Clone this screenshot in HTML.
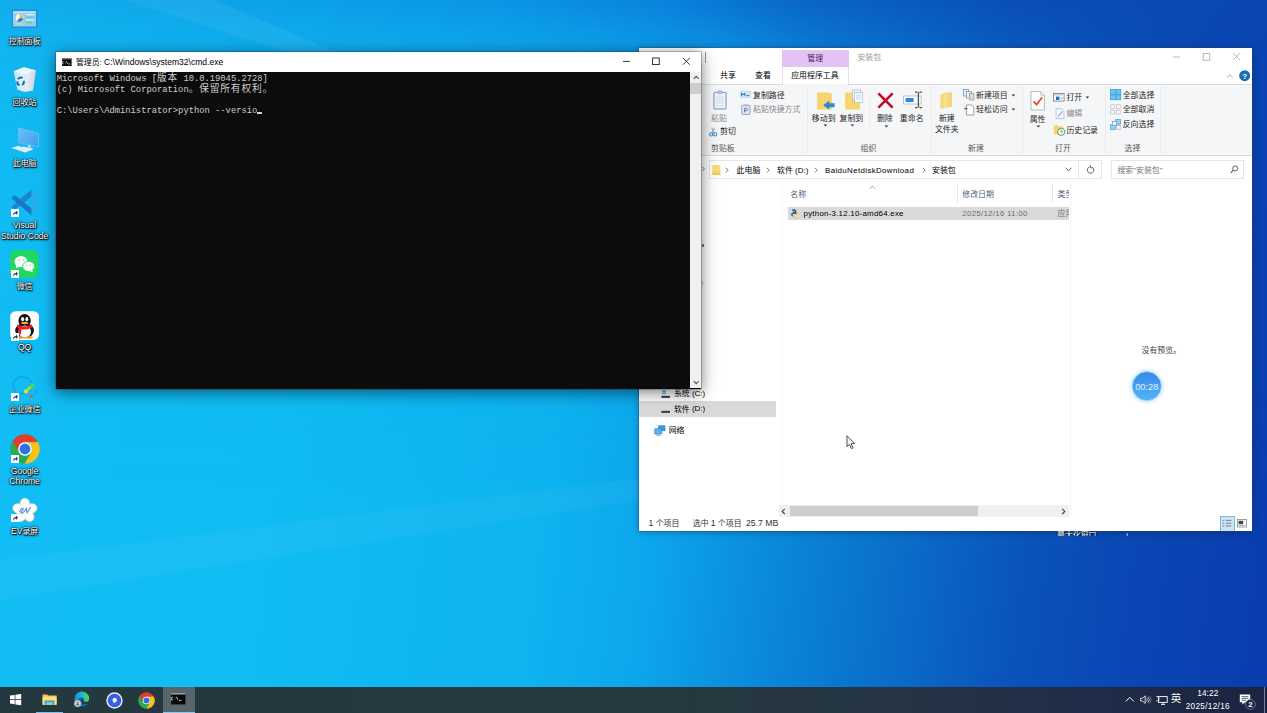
<!DOCTYPE html>
<html lang="zh-CN">
<head>
<meta charset="utf-8">
<title>Desktop</title>
<style>
*{box-sizing:border-box;margin:0;padding:0}
html,body{width:1267px;height:713px;overflow:hidden}
body{position:relative;font-family:"Liberation Sans","Noto Sans CJK SC",sans-serif;font-size:8px;color:#000;
background:linear-gradient(97deg,#12bef5 0%,#10bcf4 25%,#0eb3f0 45%,#0da6ec 53%,#0a86d8 63%,#0a6cc8 72%,#0a52ba 81%,#0a45b3 90%,#0a3cae 100%);}
#wall2{position:absolute;left:0;top:0;width:1267px;height:713px;background:linear-gradient(90deg,#11adec 0%,#0d9fe7 24%,#0b94e4 40%,#0a82dc 52%,#0a64c6 64%,#0a4eb6 80%,#0a46b2 100%);-webkit-mask-image:linear-gradient(180deg,#000 0%,rgba(0,0,0,.55) 6%,rgba(0,0,0,.25) 16%,rgba(0,0,0,.08) 40%,transparent 70%);mask-image:linear-gradient(180deg,#000 0%,rgba(0,0,0,.55) 6%,rgba(0,0,0,.25) 16%,rgba(0,0,0,.08) 40%,transparent 70%)}
.la{font-size:8.7px;line-height:0;position:relative;top:.1px}
.ll{font-size:8.6px;line-height:0}
.lb{font-size:8px;line-height:0;position:relative;top:-.3px}
.cj{font-size:9.7px;line-height:0;letter-spacing:.86px;position:relative;top:.2px}
svg{overflow:visible}
</style>
</head>
<body>
<div id="wall2"></div>
<svg style="position:absolute;left:0;top:0" width="1267" height="713" viewBox="0 0 1267 713"><polygon points="125,0 215,0 345,56 300,56" fill="#fff" opacity=".05"/><polygon points="0,560 640,478 640,500 0,600" fill="#fff" opacity=".035"/></svg>
<div id="desktop">
<svg style="position:absolute;left:12.0px;top:10.0px;" width="25" height="18" viewBox="0 0 25 18"><rect x="0.3" y="0.3" width="24.4" height="16.8" fill="#8fd0f2" stroke="#2b86d2" stroke-width="1.2"/><rect x="1.5" y="1.5" width="22" height="1.6" fill="#b8e2f8"/><circle cx="7.6" cy="8" r="3.9" fill="#f2f6fa"/><path d="M7.6 8 L7.6 4.1 A3.9 3.9 0 0 1 11.4 8.6 Z" fill="#f5c12e"/><path d="M7.6 8 L11.4 8.6 A3.9 3.9 0 0 1 5 10.9 Z" fill="#2d7fd0"/><rect x="14" y="4" width="8" height="1.3" fill="#d8eefa"/><rect x="14" y="6.6" width="8" height="1.3" fill="#66b5e8"/><rect x="14" y="9.2" width="8" height="1.3" fill="#d8eefa"/><rect x="14" y="11.8" width="6" height="1.3" fill="#7cc67a"/><rect x="3" y="13.2" width="8" height="1.2" fill="#e9d98a"/></svg>
<span style="position:absolute;left:-7.4px;width:64px;text-align:center;top:35.7px;font-size:7.92px;line-height:12px;color:#fff;white-space:nowrap;text-shadow:0.7px 0.7px 0.8px #000,0 0 1.4px #000,0 0 2.2px rgba(0,0,0,.85),0.5px 1px 2.5px rgba(0,0,0,.6);">控制面板</span>
<svg style="position:absolute;left:12.0px;top:66.0px;" width="26" height="27" viewBox="0 0 26 27"><defs><linearGradient id="rb" x1="0" x2="1"><stop offset="0" stop-color="#cfe6f4"/><stop offset=".5" stop-color="#f4f8fb"/><stop offset="1" stop-color="#dcd6dc"/></linearGradient></defs><path d="M1.6 5.2 L12 1.2 L24 4.6 L21 24.4 L12.6 26 L5.4 23.4 Z" fill="url(#rb)" opacity=".93"/><path d="M1.6 5.2 L12.6 8.2 L24 4.6 L12 1.2 Z" fill="#eef6fb" opacity=".95"/><path d="M12.6 8.2 L12.6 26" stroke="#c8d4de" stroke-width=".5"/><g fill="none" stroke="#1767b8" stroke-width="1.9"><path d="M6 13.2 A3.2 3.2 0 0 1 10.6 12"/><path d="M11.6 14.8 A3.2 3.2 0 0 1 10 18.8"/><path d="M7.6 19.2 A3.2 3.2 0 0 1 5.4 15.4"/></g></svg>
<span style="position:absolute;left:-7.4px;width:64px;text-align:center;top:96.8px;font-size:7.92px;line-height:12px;color:#fff;white-space:nowrap;text-shadow:0.7px 0.7px 0.8px #000,0 0 1.4px #000,0 0 2.2px rgba(0,0,0,.85),0.5px 1px 2.5px rgba(0,0,0,.6);">回收站</span>
<svg style="position:absolute;left:10.0px;top:126.0px;" width="32" height="28" viewBox="0 0 32 28"><defs><linearGradient id="pc" x1="0" y1="0" x2="1" y2="1"><stop offset="0" stop-color="#6cc0f6"/><stop offset="1" stop-color="#3a9ee8"/></linearGradient></defs><path d="M8.6 2 L28.6 7.4 L28.6 21 L8.6 16.6 Z" fill="url(#pc)" stroke="#7cc4f6" stroke-width=".7"/><path d="M18 19.2 L20.8 19.8 L21 21.6 L17.8 21 Z" fill="#cfe4f4"/><path d="M13.4 20.6 L23.6 22.8 L20.6 24.4 L10.6 22 Z" fill="#e6f0f8"/><path d="M1.6 22 L8 20 L22 23.6 L15.4 26.6 Z" fill="#f2f4f8"/><path d="M3.6 22.2 L8 20.8 L19.6 23.7 L15.2 25.6 Z" fill="#dfe6f2" opacity=".8"/></svg>
<span style="position:absolute;left:-7.4px;width:64px;text-align:center;top:158.4px;font-size:7.92px;line-height:12px;color:#fff;white-space:nowrap;text-shadow:0.7px 0.7px 0.8px #000,0 0 1.4px #000,0 0 2.2px rgba(0,0,0,.85),0.5px 1px 2.5px rgba(0,0,0,.6);">此电脑</span>
<svg style="position:absolute;left:9.5px;top:188.0px;" width="30" height="29" viewBox="0 0 30 29"><path d="M21.4 1.4 L27.4 4 L27.4 24.6 L21.4 27.2 Z" fill="#27acee"/><path d="M21.4 1.4 L21.4 8.4 L5 21.4 L1.8 19.4 L1.8 18.2 Z" fill="#1c86cf"/><path d="M21.4 27.2 L21.4 20.2 L5 7.2 L1.8 9.2 L1.8 10.4 Z" fill="#1878c0"/></svg>
<svg style="position:absolute;left:10.8px;top:209.0px;" width="8" height="8" viewBox="0 0 8 8"><rect x="0" y="0" width="8" height="8" fill="#fff"/><path d="M2 6.4 C2 4 3.4 3 5 3 L5 1.6 L7 3.8 L5 6 L5 4.6 C3.8 4.6 3 5 2 6.4Z" fill="#1a3f8a"/></svg>
<span style="position:absolute;left:-7.4px;width:64px;text-align:center;top:220.1px;font-size:7.92px;line-height:12px;color:#fff;white-space:nowrap;text-shadow:0.7px 0.7px 0.8px #000,0 0 1.4px #000,0 0 2.2px rgba(0,0,0,.85),0.5px 1px 2.5px rgba(0,0,0,.6);"><span class="ll">Visual</span></span>
<span style="position:absolute;left:-7.4px;width:64px;text-align:center;top:231.1px;font-size:7.92px;line-height:12px;color:#fff;white-space:nowrap;text-shadow:0.7px 0.7px 0.8px #000,0 0 1.4px #000,0 0 2.2px rgba(0,0,0,.85),0.5px 1px 2.5px rgba(0,0,0,.6);"><span class="ll">Studio Code</span></span>
<svg style="position:absolute;left:10.4px;top:250.0px;" width="29" height="28" viewBox="0 0 29 28"><rect x="0.2" y="0.2" width="28.4" height="27.6" rx="5.6" fill="#20d760"/><ellipse cx="11" cy="11.6" rx="6.6" ry="5.6" fill="#f2fbf4"/><path d="M6.6 15 L5.8 18.4 L9.6 16.6Z" fill="#f2fbf4"/><ellipse cx="18.6" cy="16.4" rx="5.9" ry="5" fill="#fafffb" stroke="#20d760" stroke-width=".8"/><path d="M22 20 L23.2 22.6 L19.6 21.2Z" fill="#fafffb"/><circle cx="8.8" cy="10" r=".8" fill="#8ad0a0"/><circle cx="13.2" cy="10" r=".8" fill="#8ad0a0"/><circle cx="16.6" cy="15.2" r=".7" fill="#8ad0a0"/><circle cx="20.4" cy="15.2" r=".7" fill="#8ad0a0"/></svg>
<svg style="position:absolute;left:11.0px;top:270.2px;" width="8" height="8" viewBox="0 0 8 8"><rect x="0" y="0" width="8" height="8" fill="#fff"/><path d="M2 6.4 C2 4 3.4 3 5 3 L5 1.6 L7 3.8 L5 6 L5 4.6 C3.8 4.6 3 5 2 6.4Z" fill="#1a3f8a"/></svg>
<span style="position:absolute;left:-7.4px;width:64px;text-align:center;top:281.1px;font-size:7.92px;line-height:12px;color:#fff;white-space:nowrap;text-shadow:0.7px 0.7px 0.8px #000,0 0 1.4px #000,0 0 2.2px rgba(0,0,0,.85),0.5px 1px 2.5px rgba(0,0,0,.6);">微信</span>
<svg style="position:absolute;left:10.4px;top:311.3px;" width="29.2" height="29.2" viewBox="0 0 29.2 29.2"><rect x="0.2" y="0.2" width="28.8" height="28.8" rx="5.6" fill="#fdfdfd"/><ellipse cx="14.6" cy="19.6" rx="9.4" ry="7.6" fill="#141414"/><ellipse cx="14.6" cy="9.8" rx="6.2" ry="6.8" fill="#111"/><ellipse cx="14.8" cy="20.6" rx="6.2" ry="6.2" fill="#fdfdfd"/><path d="M7.4 13.2 C11 16 18.4 16 21.8 13.2 L22.4 16 C18 19.4 11.4 19.4 6.8 16 Z" fill="#e8222c"/><path d="M8.6 16.6 L11.6 17.8 L10.8 23.4 L8 22.4 Z" fill="#e8222c"/><ellipse cx="12.6" cy="8.2" rx="1.5" ry="2.1" fill="#fff"/><ellipse cx="16.8" cy="8.2" rx="1.5" ry="2.1" fill="#fff"/><ellipse cx="14.7" cy="12" rx="3.6" ry="1.2" fill="#f5a81c"/><ellipse cx="10" cy="26.6" rx="3.6" ry="1.3" fill="#f5a81c"/><ellipse cx="19.4" cy="26.6" rx="3.6" ry="1.3" fill="#f5a81c"/></svg>
<svg style="position:absolute;left:11.0px;top:333.0px;" width="8" height="8" viewBox="0 0 8 8"><rect x="0" y="0" width="8" height="8" fill="#fff"/><path d="M2 6.4 C2 4 3.4 3 5 3 L5 1.6 L7 3.8 L5 6 L5 4.6 C3.8 4.6 3 5 2 6.4Z" fill="#1a3f8a"/></svg>
<span style="position:absolute;left:-7.4px;width:64px;text-align:center;top:342.4px;font-size:7.92px;line-height:12px;color:#fff;white-space:nowrap;text-shadow:0.7px 0.7px 0.8px #000,0 0 1.4px #000,0 0 2.2px rgba(0,0,0,.85),0.5px 1px 2.5px rgba(0,0,0,.6);"><span class="ll">QQ</span></span>
<svg style="position:absolute;left:10.0px;top:372.0px;" width="32" height="30" viewBox="0 0 32 30"><path d="M3 13.4 A9.6 8.4 0 1 1 8 20.6 L5.2 22.6 L5.6 19 A9 8 0 0 1 3 13.4Z" fill="none" stroke="#1c86ea" stroke-width="1.6" opacity=".5"/><path d="M15.8 19.6 L22.4 13.4" stroke="#8edc4a" stroke-width="3.2" stroke-linecap="round"/><circle cx="22.6" cy="13.2" r="2.2" fill="#3fd85a"/><circle cx="16" cy="19.4" r="2.1" fill="#d9e04a"/><circle cx="21.4" cy="24.2" r="1.6" fill="#e2553c"/><circle cx="26" cy="20" r="1.3" fill="#2a8cf0" opacity=".7"/></svg>
<svg style="position:absolute;left:11.0px;top:393.0px;" width="8" height="8" viewBox="0 0 8 8"><rect x="0" y="0" width="8" height="8" fill="#fff"/><path d="M2 6.4 C2 4 3.4 3 5 3 L5 1.6 L7 3.8 L5 6 L5 4.6 C3.8 4.6 3 5 2 6.4Z" fill="#1a3f8a"/></svg>
<span style="position:absolute;left:-7.4px;width:64px;text-align:center;top:403.8px;font-size:7.92px;line-height:12px;color:#fff;white-space:nowrap;text-shadow:0.7px 0.7px 0.8px #000,0 0 1.4px #000,0 0 2.2px rgba(0,0,0,.85),0.5px 1px 2.5px rgba(0,0,0,.6);">企业微信</span>
<svg style="position:absolute;left:10.0px;top:433.5px;" width="30" height="30" viewBox="0 0 30 30"><path d="M2.61 7.27 A14.6 14.6 0 0 1 27.89 8.14 L15.00 8.14 A6.86 6.86 0 0 0 9.06 18.43 Z" fill="#e33b2e" stroke="#e33b2e" stroke-width=".3"/><path d="M27.89 8.14 A14.6 14.6 0 0 1 14.50 29.59 L20.94 18.43 A6.86 6.86 0 0 0 15.00 8.14 Z" fill="#fbc116" stroke="#fbc116" stroke-width=".3"/><path d="M14.50 29.59 A14.6 14.6 0 0 1 2.61 7.27 L9.06 18.43 A6.86 6.86 0 0 0 20.94 18.43 Z" fill="#2da94f" stroke="#2da94f" stroke-width=".3"/><circle cx="15" cy="15" r="6.86" fill="#fff"/><circle cx="15" cy="15" r="5.40" fill="#2f6fe0"/></svg>
<svg style="position:absolute;left:10.8px;top:455.2px;" width="8" height="8" viewBox="0 0 8 8"><rect x="0" y="0" width="8" height="8" fill="#fff"/><path d="M2 6.4 C2 4 3.4 3 5 3 L5 1.6 L7 3.8 L5 6 L5 4.6 C3.8 4.6 3 5 2 6.4Z" fill="#1a3f8a"/></svg>
<span style="position:absolute;left:-7.4px;width:64px;text-align:center;top:465.6px;font-size:7.92px;line-height:12px;color:#fff;white-space:nowrap;text-shadow:0.7px 0.7px 0.8px #000,0 0 1.4px #000,0 0 2.2px rgba(0,0,0,.85),0.5px 1px 2.5px rgba(0,0,0,.6);"><span class="ll">Google</span></span>
<span style="position:absolute;left:-7.4px;width:64px;text-align:center;top:476.4px;font-size:7.92px;line-height:12px;color:#fff;white-space:nowrap;text-shadow:0.7px 0.7px 0.8px #000,0 0 1.4px #000,0 0 2.2px rgba(0,0,0,.85),0.5px 1px 2.5px rgba(0,0,0,.6);"><span class="ll">Chrome</span></span>
<svg style="position:absolute;left:10.9px;top:497.6px;" width="28" height="25" viewBox="0 0 31 28"><g fill="#fbfdff" stroke="#f0d6a8" stroke-width=".7"><ellipse cx="15.4" cy="6.6" rx="5.4" ry="6.4" transform="rotate(0 15.4 14.2)"/><ellipse cx="15.4" cy="6.6" rx="5.4" ry="6.4" transform="rotate(72 15.4 14.2)"/><ellipse cx="15.4" cy="6.6" rx="5.4" ry="6.4" transform="rotate(144 15.4 14.2)"/><ellipse cx="15.4" cy="6.6" rx="5.4" ry="6.4" transform="rotate(216 15.4 14.2)"/><ellipse cx="15.4" cy="6.6" rx="5.4" ry="6.4" transform="rotate(288 15.4 14.2)"/></g><circle cx="15.4" cy="14.2" r="7.4" fill="#f8fcff"/><path d="M9.4 15 C11.6 11 14.2 10.6 13.4 13 C12.8 14.8 10.6 15.6 10.8 16.6 C11.2 18 14 16.4 15.2 14.6 L17 11.4 L17.8 16.8 L21.6 10.4" fill="none" stroke="#5c86e0" stroke-width="1.2" stroke-linecap="round" stroke-linejoin="round"/></svg>
<svg style="position:absolute;left:11.0px;top:514.0px;" width="8" height="8" viewBox="0 0 8 8"><rect x="0" y="0" width="8" height="8" fill="#fff"/><path d="M2 6.4 C2 4 3.4 3 5 3 L5 1.6 L7 3.8 L5 6 L5 4.6 C3.8 4.6 3 5 2 6.4Z" fill="#1a3f8a"/></svg>
<span style="position:absolute;left:-7.4px;width:64px;text-align:center;top:526.3px;font-size:7.92px;line-height:12px;color:#fff;white-space:nowrap;text-shadow:0.7px 0.7px 0.8px #000,0 0 1.4px #000,0 0 2.2px rgba(0,0,0,.85),0.5px 1px 2.5px rgba(0,0,0,.6);"><span class="ll">EV</span>录屏</span>
</div>
<div id="explorer">
<div style="position:absolute;left:638.8px;top:47.6px;width:612.8px;height:483.8px;background:#fff;box-shadow:0 1px 7px rgba(0,0,0,.32),0 0 0 .6px rgba(60,90,130,.55);"></div>
<div style="position:absolute;left:705.2px;top:52.4px;width:0.8px;height:10.6px;background:#9a9a9a;"></div>
<div style="position:absolute;left:782.0px;top:49.5px;width:66.5px;height:17.6px;background:#e4c2f6;"></div>
<span style="position:absolute;left:795.2px;width:40px;text-align:center;top:52.5px;font-size:7.92px;line-height:12px;color:#3b1f5a;white-space:nowrap;">管理</span>
<span style="position:absolute;left:857.4px;top:52.3px;font-size:7.92px;line-height:12px;color:#999;white-space:nowrap;">安装包</span>
<svg style="position:absolute;left:1166.0px;top:50.0px;" width="90" height="14" viewBox="0 0 90 14"><g stroke="#a6a6a6" stroke-width=".8" fill="none"><path d="M6.6 7 H14"/><rect x="37.2" y="3.6" width="6.6" height="6.6"/><path d="M67.2 3.2 L74 10 M74 3.2 L67.2 10"/></g></svg>
<span style="position:absolute;left:720.0px;top:69.9px;font-size:7.92px;line-height:12px;color:#000;white-space:nowrap;">共享</span>
<span style="position:absolute;left:755.0px;top:69.9px;font-size:7.92px;line-height:12px;color:#000;white-space:nowrap;">查看</span>
<div style="position:absolute;left:782.0px;top:67.1px;width:66.5px;height:17.6px;background:#fff;border-left:.7px solid #e2e3e4;border-right:.7px solid #e2e3e4;"></div>
<span style="position:absolute;left:791.2px;top:69.9px;font-size:7.92px;line-height:12px;color:#000;white-space:nowrap;">应用程序工具</span>
<svg style="position:absolute;left:1226.0px;top:72.0px;" width="8" height="8" viewBox="0 0 8 8"><path d="M1.2 5.6 L4 2.8 L6.8 5.6" fill="none" stroke="#a0a0a0" stroke-width=".9"/></svg>
<svg style="position:absolute;left:1239.0px;top:70.4px;" width="11.4" height="11.4" viewBox="0 0 11.4 11.4"><circle cx="5.7" cy="5.7" r="5.5" fill="#1b6db3"/><text x="5.7" y="8.6" font-size="8" font-weight="bold" text-anchor="middle" fill="#fff" font-family="Liberation Sans,sans-serif">?</text></svg>
<div style="position:absolute;left:638.8px;top:84.3px;width:612.8px;height:72.2px;background:#f5f6f7;border-top:.7px solid #dadbdc;border-bottom:.7px solid #dadbdc;"></div>
<div style="position:absolute;left:782.7px;top:83.8px;width:65.1px;height:1.4px;background:#f5f6f7;"></div>
<div style="position:absolute;left:807.2px;top:87.0px;width:0.7px;height:66.0px;background:#eaebec;"></div>
<div style="position:absolute;left:930.6px;top:87.0px;width:0.7px;height:66.0px;background:#eaebec;"></div>
<div style="position:absolute;left:1021.6px;top:87.0px;width:0.7px;height:66.0px;background:#eaebec;"></div>
<div style="position:absolute;left:1105.0px;top:87.0px;width:0.7px;height:66.0px;background:#eaebec;"></div>
<div style="position:absolute;left:1160.0px;top:87.0px;width:0.7px;height:66.0px;background:#eaebec;"></div>
<div style="position:absolute;left:868.8px;top:96.6px;width:0.7px;height:31.5px;background:#edeeef;"></div>
<svg style="position:absolute;left:712.6px;top:90.0px;" width="14" height="20" viewBox="0 0 14 20"><rect x=".9" y="2.4" width="12.2" height="16.6" rx=".6" fill="#e6ecf6" stroke="#7f90c2" stroke-width="1"/><rect x="2.4" y="4.6" width="9.2" height="13" fill="#f6f9fe"/><g stroke="#c0cdea" stroke-width=".45"><path d="M2.4 6.8h9.2M2.4 9h9.2M2.4 11.2h9.2M2.4 13.4h9.2M2.4 15.6h9.2M4.7 4.6v13M7 4.6v13M9.3 4.6v13"/></g><rect x="4.8" y="0.8" width="4.4" height="2.6" rx=".8" fill="#c2cce2" stroke="#7f90c2" stroke-width=".6"/></svg>
<span style="position:absolute;left:704.0px;width:30px;text-align:center;top:113.0px;font-size:7.92px;line-height:12px;color:#8a8a8a;white-space:nowrap;">粘贴</span>
<svg style="position:absolute;left:708.6px;top:127.0px;" width="8.4" height="10" viewBox="0 0 9 10"><g fill="none" stroke="#2b8ad6" stroke-width="1.1"><circle cx="2.4" cy="7.6" r="1.7"/><circle cx="6.6" cy="7.6" r="1.7"/></g><path d="M3.2 6.2 L6 0.6 M5.8 6.2 L3 0.6" stroke="#777" stroke-width=".7"/></svg>
<span style="position:absolute;left:720.0px;top:126.3px;font-size:7.92px;line-height:12px;color:#1e1e1e;white-space:nowrap;">剪切</span>
<span style="position:absolute;left:711.0px;top:142.8px;font-size:7.92px;line-height:12px;color:#5a5a5a;white-space:nowrap;">剪贴板</span>
<svg style="position:absolute;left:740.2px;top:91.4px;" width="11" height="7" viewBox="0 0 11 7"><rect x=".3" y=".3" width="10.4" height="6.2" fill="#cfe6f8" stroke="#a8cdea" stroke-width=".5"/><path d="M1.6 5V2l1.6 2 1.6-2v3" stroke="#24507e" stroke-width=".8" fill="none"/><path d="M6.2 4.6h3" stroke="#24507e" stroke-width=".7"/></svg>
<span style="position:absolute;left:753.0px;top:89.8px;font-size:7.92px;line-height:12px;color:#1e1e1e;white-space:nowrap;">复制路径</span>
<svg style="position:absolute;left:740.6px;top:104.4px;" width="10" height="11" viewBox="0 0 10 11"><rect x=".8" y="1.4" width="8.2" height="9" rx=".6" fill="#e4e9f4" stroke="#8c98bc" stroke-width=".9"/><rect x="3" y=".4" width="3.8" height="1.8" fill="#aab4cf"/><path d="M3.6 8.4V4.4h2a1.1 1.1 0 0 1 0 2.2h-2" stroke="#4c5c9c" stroke-width=".8" fill="none"/></svg>
<span style="position:absolute;left:753.0px;top:104.3px;font-size:7.92px;line-height:12px;color:#8a8a8a;white-space:nowrap;">粘贴快捷方式</span>
<svg style="position:absolute;left:816.0px;top:90.6px;" width="19" height="20" viewBox="0 0 19 20"><path d="M1 1.6h12.4l2.6 1.2V18.4H1Z" fill="#f8d775"/><g stroke="#f2c85c" stroke-width=".5"><path d="M3.4 1.6v16.8M6 1.6v16.8M8.6 1.6v16.8M11.2 1.6v16.8M13.6 2v16.4"/></g><path d="M18.6 16.2h-5.4v2.6L7.2 14.2l6-4.6v2.6h5.4Z" fill="#2a8ad8"/></svg>
<span style="position:absolute;left:806.7px;width:34px;text-align:center;top:113.0px;font-size:7.92px;line-height:12px;color:#1e1e1e;white-space:nowrap;">移动到</span>
<svg style="position:absolute;left:822.6px;top:124.2px;" width="5" height="3" viewBox="0 0 5 3"><path d="M.6.4h3.6L2.4 2.4Z" fill="#333"/></svg>
<svg style="position:absolute;left:843.6px;top:88.6px;" width="20" height="22" viewBox="0 0 20 22"><g transform="translate(0,2)"><path d="M1 1.6h12.4l2.6 1.2V18.4H1Z" fill="#f8d775"/><g stroke="#f2c85c" stroke-width=".5"><path d="M3.4 1.6v16.8M6 1.6v16.8M8.6 1.6v16.8M11.2 1.6v16.8M13.6 2v16.4"/></g></g><rect x="8.4" y="1" width="8" height="10" fill="#eef2f8" stroke="#9fb0c8" stroke-width=".6"/><rect x="10.6" y="3.4" width="8" height="10" fill="#f6f9fd" stroke="#9fb0c8" stroke-width=".6"/><path d="M12 6.2h5M12 8h5M12 9.8h5" stroke="#a8c4e4" stroke-width=".6"/></svg>
<span style="position:absolute;left:834.4px;width:34px;text-align:center;top:113.0px;font-size:7.92px;line-height:12px;color:#1e1e1e;white-space:nowrap;">复制到</span>
<svg style="position:absolute;left:850.3px;top:124.2px;" width="5" height="3" viewBox="0 0 5 3"><path d="M.6.4h3.6L2.4 2.4Z" fill="#333"/></svg>
<svg style="position:absolute;left:876.6px;top:91.6px;" width="17" height="17" viewBox="0 0 17 17"><path d="M1.4 1.4 L15.6 15.6 M15.6 1.4 L1.4 15.6" stroke="#c30a2a" stroke-width="2.6"/></svg>
<span style="position:absolute;left:869.8px;width:30px;text-align:center;top:113.0px;font-size:7.92px;line-height:12px;color:#1e1e1e;white-space:nowrap;">删除</span>
<svg style="position:absolute;left:883.5px;top:124.6px;" width="5" height="3" viewBox="0 0 5 3"><path d="M.6.4h3.6L2.4 2.4Z" fill="#333"/></svg>
<svg style="position:absolute;left:902.6px;top:91.0px;" width="20" height="18" viewBox="0 0 20 18"><rect x=".5" y="5" width="17.6" height="8" fill="#fdfdfd" stroke="#9ab0c8" stroke-width=".7"/><rect x="2.6" y="7" width="8" height="4" fill="#2a8ad8"/><path d="M12 1.2h2.4m2 0H19M12 16.6h2.4m2 0H19M15.4 1.2v15.4" stroke="#505050" stroke-width="1.3" fill="none"/></svg>
<span style="position:absolute;left:894.7px;width:34px;text-align:center;top:113.0px;font-size:7.92px;line-height:12px;color:#1e1e1e;white-space:nowrap;">重命名</span>
<span style="position:absolute;left:860.6px;top:142.8px;font-size:7.92px;line-height:12px;color:#5a5a5a;white-space:nowrap;">组织</span>
<svg style="position:absolute;left:939.0px;top:91.0px;" width="15" height="19" viewBox="0 0 15 19"><defs><linearGradient id="nf" x1="0" x2="1"><stop offset="0" stop-color="#fbe39a"/><stop offset="1" stop-color="#f3cf62"/></linearGradient></defs><path d="M1.4 3.4 L8.6 1 L8.6 16.4 L1.4 17.8Z" fill="#f6d57a"/><path d="M4.6 2.4 L12.8 1.2 L12.8 15.8 L4.6 17.2Z" fill="url(#nf)"/></svg>
<span style="position:absolute;left:931.8px;width:30px;text-align:center;top:113.0px;font-size:7.92px;line-height:12px;color:#1e1e1e;white-space:nowrap;">新建</span>
<span style="position:absolute;left:929.8px;width:34px;text-align:center;top:124.3px;font-size:7.92px;line-height:12px;color:#1e1e1e;white-space:nowrap;">文件夹</span>
<svg style="position:absolute;left:963.0px;top:89.4px;" width="12" height="12" viewBox="0 0 12 12"><rect x=".6" y=".6" width="5" height="6.4" fill="#dcebf8" stroke="#5f8fc0" stroke-width=".7"/><rect x="3.6" y="2.6" width="5" height="6.4" fill="#f0f0f0" stroke="#8c8c8c" stroke-width=".7"/><rect x="6.4" y="4.6" width="4.6" height="6.4" fill="#d8d8d8" stroke="#9a9a9a" stroke-width=".7"/></svg>
<span style="position:absolute;left:976.0px;top:89.8px;font-size:7.92px;line-height:12px;color:#1e1e1e;white-space:nowrap;">新建项目</span>
<svg style="position:absolute;left:1010.6px;top:93.6px;" width="5" height="3" viewBox="0 0 5 3"><path d="M.6.4h3.6L2.4 2.4Z" fill="#333"/></svg>
<svg style="position:absolute;left:963.6px;top:103.6px;" width="11" height="12" viewBox="0 0 11 12"><path d="M2.4 1h5.4l2 2v8H2.4Z" fill="#fdfdfd" stroke="#7a7a7a" stroke-width=".7"/><path d="M.4 4.6h3.4M1.2 3.6v2" stroke="#444" stroke-width=".7"/></svg>
<span style="position:absolute;left:976.0px;top:104.3px;font-size:7.92px;line-height:12px;color:#1e1e1e;white-space:nowrap;">轻松访问</span>
<svg style="position:absolute;left:1010.6px;top:108.2px;" width="5" height="3" viewBox="0 0 5 3"><path d="M.6.4h3.6L2.4 2.4Z" fill="#333"/></svg>
<span style="position:absolute;left:968.0px;top:142.8px;font-size:7.92px;line-height:12px;color:#5a5a5a;white-space:nowrap;">新建</span>
<svg style="position:absolute;left:1030.4px;top:90.6px;" width="16" height="20" viewBox="0 0 16 20"><path d="M1 .6h9.8l3.6 3.6v14.8H1Z" fill="#fdfdfd" stroke="#a8a8a8" stroke-width=".8"/><path d="M10.8 .6v3.6h3.6" fill="#eee" stroke="#a8a8a8" stroke-width=".6"/><path d="M3.6 10.4 L6.6 13.6 L12.2 6.2" fill="none" stroke="#d9512c" stroke-width="1.7"/></svg>
<span style="position:absolute;left:1022.6px;width:30px;text-align:center;top:113.8px;font-size:7.92px;line-height:12px;color:#1e1e1e;white-space:nowrap;">属性</span>
<svg style="position:absolute;left:1036.2px;top:124.6px;" width="5" height="3" viewBox="0 0 5 3"><path d="M.6.4h3.6L2.4 2.4Z" fill="#333"/></svg>
<svg style="position:absolute;left:1053.4px;top:93.0px;" width="12" height="9" viewBox="0 0 12 9"><rect x=".5" y=".5" width="10.6" height="7.6" fill="#fdfdfd" stroke="#6a7a8a" stroke-width=".8"/><rect x="1" y="1" width="9.6" height="1.6" fill="#c8d4e0"/><rect x="3" y="3.6" width="3.4" height="3.4" fill="#1f6fb8"/><rect x="7.2" y="4" width="2.6" height="2.4" fill="#b8d4ec"/></svg>
<span style="position:absolute;left:1066.4px;top:92.0px;font-size:7.92px;line-height:12px;color:#1e1e1e;white-space:nowrap;">打开</span>
<svg style="position:absolute;left:1084.9px;top:95.6px;" width="5" height="3" viewBox="0 0 5 3"><path d="M.6.4h3.6L2.4 2.4Z" fill="#333"/></svg>
<svg style="position:absolute;left:1054.6px;top:108.2px;" width="10" height="11" viewBox="0 0 10 11"><path d="M1 .6h5.4l2.6 2.6v7.4H1Z" fill="#f4f7fd" stroke="#a8b8dc" stroke-width=".7"/><path d="M3 8.6 L7.4 3.4" stroke="#9ab0e0" stroke-width="1.2"/></svg>
<span style="position:absolute;left:1066.4px;top:108.1px;font-size:7.92px;line-height:12px;color:#8a8a8a;white-space:nowrap;">编辑</span>
<svg style="position:absolute;left:1052.8px;top:123.6px;" width="13" height="12" viewBox="0 0 13 12"><path d="M.8 1.4h4l1 1h4.4v8H.8Z" fill="#f3d56e"/><circle cx="8.2" cy="7.8" r="3.6" fill="#f2f6f2" stroke="#4a9a4a" stroke-width=".9"/><path d="M8.2 5.8v2.2h1.8" stroke="#4a9a4a" stroke-width=".8" fill="none"/></svg>
<span style="position:absolute;left:1066.4px;top:124.7px;font-size:7.92px;line-height:12px;color:#1e1e1e;white-space:nowrap;">历史记录</span>
<span style="position:absolute;left:1055.0px;top:142.8px;font-size:7.92px;line-height:12px;color:#5a5a5a;white-space:nowrap;">打开</span>
<svg style="position:absolute;left:1109.6px;top:89.4px;" width="12" height="12" viewBox="0 0 12 12"><g fill="#6cc4ee" stroke="#2a9adf" stroke-width=".7"><rect x=".5" y=".5" width="4.8" height="4.8"/><rect x="6" y=".5" width="4.8" height="4.8"/><rect x=".5" y="6" width="4.8" height="4.8"/><rect x="6" y="6" width="4.8" height="4.8"/></g></svg>
<span style="position:absolute;left:1122.7px;top:89.8px;font-size:7.92px;line-height:12px;color:#1e1e1e;white-space:nowrap;">全部选择</span>
<svg style="position:absolute;left:1109.6px;top:104.2px;" width="12" height="12" viewBox="0 0 12 12"><g fill="#fafafa" stroke="#b8b8c8" stroke-width=".7"><rect x=".7" y=".7" width="3.8" height="3.8"/><rect x="6.4" y=".7" width="3.8" height="3.8"/><rect x=".7" y="6.2" width="3.8" height="3.8"/><rect x="6.4" y="6.2" width="3.8" height="3.8"/></g></svg>
<span style="position:absolute;left:1122.7px;top:104.3px;font-size:7.92px;line-height:12px;color:#1e1e1e;white-space:nowrap;">全部取消</span>
<svg style="position:absolute;left:1109.6px;top:118.6px;" width="12" height="12" viewBox="0 0 12 12"><g stroke-width=".7"><rect x="5.8" y=".6" width="4.6" height="4.6" fill="#9ad4f4" stroke="#3a9adf"/><rect x=".6" y="5.8" width="4.6" height="4.6" fill="#9ad4f4" stroke="#3a9adf"/><rect x="2.4" y="2.6" width="4" height="4" fill="#f4f8fc" stroke="#6a9acf"/><rect x="6.4" y="6.4" width="3.8" height="3.8" fill="#f4f8fc" stroke="#9ab0cf"/></g></svg>
<span style="position:absolute;left:1122.7px;top:118.9px;font-size:7.92px;line-height:12px;color:#1e1e1e;white-space:nowrap;">反向选择</span>
<span style="position:absolute;left:1124.6px;top:142.8px;font-size:7.92px;line-height:12px;color:#5a5a5a;white-space:nowrap;">选择</span>
<div style="position:absolute;left:708.6px;top:159.7px;width:370.6px;height:19.6px;background:#fff;border:.7px solid #e6e6e6;"></div>
<div style="position:absolute;left:1079.2px;top:159.7px;width:23.0px;height:19.6px;background:#fff;border:.7px solid #e6e6e6;border-left:none;"></div>
<div style="position:absolute;left:1110.8px;top:159.7px;width:133.0px;height:19.6px;background:#fff;border:.7px solid #e6e6e6;"></div>
<svg style="position:absolute;left:711.6px;top:163.6px;" width="9" height="12" viewBox="0 0 9 12"><path d="M.4 1h6.4l1.6 1V11H.4Z" fill="#f7dc7a"/><path d="M.4 8.6h8V11h-8Z" fill="#efcb5a"/></svg>
<svg style="position:absolute;left:725.4px;top:166.6px;" width="4" height="6.4" viewBox="0 0 4 6.4"><path d="M.8.8 L3.2 3.2 L.8 5.6" fill="none" stroke="#6a6a6a" stroke-width=".9"/></svg>
<svg style="position:absolute;left:766.4px;top:166.6px;" width="4" height="6.4" viewBox="0 0 4 6.4"><path d="M.8.8 L3.2 3.2 L.8 5.6" fill="none" stroke="#6a6a6a" stroke-width=".9"/></svg>
<svg style="position:absolute;left:814.4px;top:166.6px;" width="4" height="6.4" viewBox="0 0 4 6.4"><path d="M.8.8 L3.2 3.2 L.8 5.6" fill="none" stroke="#6a6a6a" stroke-width=".9"/></svg>
<svg style="position:absolute;left:921.6px;top:166.6px;" width="4" height="6.4" viewBox="0 0 4 6.4"><path d="M.8.8 L3.2 3.2 L.8 5.6" fill="none" stroke="#6a6a6a" stroke-width=".9"/></svg>
<span style="position:absolute;left:736.6px;top:164.9px;font-size:7.92px;line-height:12px;color:#000;white-space:nowrap;">此电脑</span>
<span style="position:absolute;left:777.0px;top:164.9px;font-size:7.92px;line-height:12px;color:#000;white-space:nowrap;">软件 <span class="lb">(D:)</span></span>
<span class="la" style="position:absolute;left:825.0px;top:164.9px;font-size:7.92px;line-height:12px;color:#000;white-space:nowrap;letter-spacing:.37px;">BaiduNetdiskDownload</span>
<span style="position:absolute;left:932.0px;top:164.9px;font-size:7.92px;line-height:12px;color:#000;white-space:nowrap;">安装包</span>
<svg style="position:absolute;left:1065.2px;top:167.4px;" width="7" height="5" viewBox="0 0 7 5"><path d="M.6.8 L3.5 3.7 L6.4.8" fill="none" stroke="#555" stroke-width="1"/></svg>
<svg style="position:absolute;left:1086.4px;top:164.6px;" width="9" height="10" viewBox="0 0 9 10"><path d="M6.9 2.5 A3.3 3.3 0 1 1 3.4 1.8" fill="none" stroke="#555" stroke-width=".9"/><path d="M4.4.2v2.6H7" fill="none" stroke="#555" stroke-width=".9"/></svg>
<span style="position:absolute;left:1117.4px;top:164.9px;font-size:7.92px;line-height:12px;color:#767676;white-space:nowrap;">搜索"安装包"</span>
<svg style="position:absolute;left:1230.4px;top:165.0px;" width="8.4" height="9" viewBox="0 0 8.4 9"><circle cx="5.2" cy="3.4" r="2.5" fill="none" stroke="#555" stroke-width=".9"/><path d="M3.4 5.2 L.8 8" stroke="#555" stroke-width="1.1"/></svg>
<svg style="position:absolute;left:702.0px;top:166.4px;" width="3" height="6" viewBox="0 0 3 6"><path d="M.4.8 L2.4 2.9 L.4 5" fill="none" stroke="#777" stroke-width=".9"/></svg>
<div style="position:absolute;left:782.4px;top:184.0px;width:0.6px;height:322.0px;background:#f8f8f8;"></div>
<svg style="position:absolute;left:660.6px;top:389.8px;" width="9.4" height="9" viewBox="0 0 9.4 9"><rect x=".4" y="5.8" width="8.6" height="2.1" fill="#3a4048"/><rect x="1.2" y=".4" width="1.6" height="1.6" fill="#2ab0c8"/><rect x="3.2" y=".4" width="1.6" height="1.6" fill="#2ab0c8"/><rect x="1.2" y="2.4" width="1.6" height="1.6" fill="#2ab0c8"/><rect x="3.2" y="2.4" width="1.6" height="1.6" fill="#2ab0c8"/></svg>
<span style="position:absolute;left:673.9px;top:387.8px;font-size:7.92px;line-height:12px;color:#000;white-space:nowrap;">系统 <span class="lb">(C:)</span></span>
<div style="position:absolute;left:639.2px;top:401.3px;width:137.0px;height:15.7px;background:#d9d9d9;"></div>
<svg style="position:absolute;left:660.6px;top:408.8px;" width="9.4" height="5" viewBox="0 0 9.4 5"><rect x=".4" y="1.8" width="8.6" height="2.1" fill="#3a4048"/></svg>
<span style="position:absolute;left:673.9px;top:403.5px;font-size:7.92px;line-height:12px;color:#000;white-space:nowrap;">软件 <span class="lb">(D:)</span></span>
<svg style="position:absolute;left:654.0px;top:425.0px;" width="12" height="11" viewBox="0 0 12 11"><rect x="4.6" y=".8" width="6.4" height="5" fill="#3d9be4" stroke="#1f78c8" stroke-width=".6"/><rect x=".8" y="3.8" width="7" height="5.2" fill="#5ab4f0" stroke="#1f78c8" stroke-width=".6"/><path d="M2.4 10.2h4" stroke="#6a7a8a" stroke-width=".8"/></svg>
<span style="position:absolute;left:668.7px;top:424.7px;font-size:7.92px;line-height:12px;color:#000;white-space:nowrap;">网络</span>
<div style="position:absolute;left:701.6px;top:243.8px;width:2.2px;height:3.6px;background:#555;opacity:.8;"></div>
<div style="position:absolute;left:701.6px;top:280.6px;width:1.4px;height:4.4px;background:#999;opacity:.6;"></div>
<span style="position:absolute;left:790.3px;top:188.8px;font-size:7.92px;line-height:12px;color:#4c607a;white-space:nowrap;">名称</span>
<svg style="position:absolute;left:869.0px;top:184.6px;" width="7" height="5" viewBox="0 0 7 5"><path d="M.8 3.8 L3.4 1.2 L6 3.8" fill="none" stroke="#8a8a8a" stroke-width=".8"/></svg>
<div style="position:absolute;left:957.2px;top:184.0px;width:0.6px;height:18.6px;background:#e5e5e5;"></div>
<span style="position:absolute;left:962.3px;top:188.8px;font-size:7.92px;line-height:12px;color:#4c607a;white-space:nowrap;">修改日期</span>
<div style="position:absolute;left:1052.3px;top:184.0px;width:0.6px;height:18.6px;background:#e5e5e5;"></div>
<div style="position:absolute;left:1057.5px;top:184px;width:11.4px;height:20px;overflow:hidden"><span style="position:absolute;left:0.0px;top:4.8px;font-size:7.92px;line-height:12px;color:#4c607a;white-space:nowrap;">类型</span></div>
<div style="position:absolute;left:788.0px;top:207.0px;width:281.0px;height:13.4px;background:#d9d9d9;"></div>
<svg style="position:absolute;left:790.0px;top:209.0px;" width="10" height="10" viewBox="0 0 10 10"><rect x="1" y="1.4" width="7.6" height="5" rx=".8" fill="#cfe4f6"/><path d="M2.2 1.2c2-.8 3.6 0 3.6 1.4v1.6H3C1.4 4.2 1.4 7 3 7" fill="none" stroke="#2f5f94" stroke-width="1.5"/><path d="M7.2 8.8c-1.8.6-3 0-3-1.2V6h2.6c1.6 0 1.6-2.8 0-2.8" fill="none" stroke="#f0d060" stroke-width="1.5"/><path d="M4 .6v3M2.8 2.6 4 3.8 5.2 2.6" stroke="#1f3f64" stroke-width=".7" fill="none"/></svg>
<span class="la" style="position:absolute;left:803.5px;top:208.4px;font-size:7.92px;line-height:12px;color:#000;white-space:nowrap;letter-spacing:.24px;">python-3.12.10-amd64.exe</span>
<span class="la" style="position:absolute;left:962.3px;top:208.4px;font-size:7.92px;line-height:12px;color:#6d6d6d;white-space:nowrap;letter-spacing:.27px;">2025/12/16 11:00</span>
<div style="position:absolute;left:1057.5px;top:204px;width:11.4px;height:20px;overflow:hidden"><span style="position:absolute;left:0.0px;top:4.3px;font-size:7.92px;line-height:12px;color:#6d6d6d;white-space:nowrap;">应用程序</span></div>
<div style="position:absolute;left:779.0px;top:505.4px;width:290.0px;height:11.4px;background:#f0f0f0;"></div>
<div style="position:absolute;left:790.2px;top:505.8px;width:187.8px;height:10.6px;background:#cdcdcd;"></div>
<svg style="position:absolute;left:781.4px;top:507.6px;" width="5" height="7" viewBox="0 0 5 7"><path d="M3.8.8 L1.2 3.4 L3.8 6" fill="none" stroke="#404040" stroke-width="1.1"/></svg>
<svg style="position:absolute;left:1061.0px;top:507.6px;" width="5" height="7" viewBox="0 0 5 7"><path d="M1.2.8 L3.8 3.4 L1.2 6" fill="none" stroke="#404040" stroke-width="1.1"/></svg>
<div style="position:absolute;left:1069.6px;top:184.0px;width:0.6px;height:333.0px;background:#f2f2f2;"></div>
<span style="position:absolute;left:1141.5px;top:344.6px;font-size:7.92px;line-height:12px;color:#444;white-space:nowrap;">没有预览。</span>
<span style="position:absolute;left:648.6px;top:518.3px;font-size:7.92px;line-height:12px;color:#333;white-space:nowrap;"><span class="la">1</span> 个项目</span>
<span style="position:absolute;left:692.8px;top:518.3px;font-size:7.92px;line-height:12px;color:#333;white-space:nowrap;">选中 <span class="la">1</span> 个项目&nbsp; <span class="la">25.7 MB</span></span>
<div style="position:absolute;left:1220.0px;top:516.2px;width:14.6px;height:15.2px;background:#c9e6f8;border:.7px solid #86b8d4;border-bottom:none;"></div>
<svg style="position:absolute;left:1222.4px;top:518.6px;" width="10" height="10" viewBox="0 0 10 10"><g stroke="#5a6a7a" stroke-width=".8"><path d="M.6 1.4h1.6M3.6 1.4h5.8M.6 4.2h1.6M3.6 4.2h5.8M.6 7h1.6M3.6 7h5.8"/></g></svg>
<svg style="position:absolute;left:1237.0px;top:519.0px;" width="10" height="9" viewBox="0 0 10 9"><rect x=".4" y=".4" width="9" height="7.6" fill="#fdfdfd" stroke="#7a7a7a" stroke-width=".7"/><rect x="1.6" y="1.8" width="4.6" height="3.4" fill="#3a4a5a"/><path d="M1.6 6.4h6.6" stroke="#7a7a7a" stroke-width=".6"/></svg>
</div>
<div id="cmd">
<div style="position:absolute;left:56.4px;top:51.9px;width:645.1px;height:336.8px;background:#0c0c0c;box-shadow:0 3px 15px rgba(0,0,0,.55),0 0 0 .6px rgba(30,50,80,.45);"></div>
<div style="position:absolute;left:56.4px;top:51.9px;width:645.1px;height:20.2px;background:#fff;"></div>
<svg style="position:absolute;left:62.4px;top:58.0px;" width="9.6" height="8" viewBox="0 0 9.6 8"><rect width="9.6" height="8" fill="#0a0a0a"/><rect width="9.6" height="1.3" fill="#888"/><path d="M1.6 3.6 a1 1.2 0 1 0 0 2.2" stroke="#fff" stroke-width=".7" fill="none"/><path d="M3.3 3.9v.4M3.3 5.2v.4M4.4 3.2l1.2 2.6M6.2 6h2" stroke="#fff" stroke-width=".7"/></svg>
<span style="position:absolute;left:75.9px;top:56.5px;font-size:7.92px;line-height:12px;color:#000;white-space:nowrap;">管理员: <span class="la" style="font-size:8.55px">C:\Windows\system32\cmd.exe</span></span>
<svg style="position:absolute;left:616.0px;top:54.0px;" width="80" height="14" viewBox="0 0 80 14"><g stroke="#111" stroke-width=".85" fill="none"><path d="M7 7.4 H13.8"/><rect x="36.6" y="4" width="6.6" height="6.6"/><path d="M67 4 L73.7 10.7 M73.7 4 L67 10.7"/></g></svg>
<div style="position:absolute;left:689.8px;top:72.1px;width:11.7px;height:316.3px;background:#f0f0f0;"></div>
<div style="position:absolute;left:690.4px;top:83.3px;width:10.6px;height:10.8px;background:#cdcdcd;"></div>
<svg style="position:absolute;left:692.6px;top:75.4px;" width="6.4" height="5" viewBox="0 0 6.4 5"><path d="M.8 3.8 L3.2 1.4 L5.6 3.8" fill="none" stroke="#505050" stroke-width="1.1"/></svg>
<svg style="position:absolute;left:692.6px;top:380.4px;" width="6.4" height="5" viewBox="0 0 6.4 5"><path d="M.8 1.2 L3.2 3.6 L5.6 1.2" fill="none" stroke="#505050" stroke-width="1.1"/></svg>
<pre style="position:absolute;left:56.7px;top:74.25px;margin:0;font-family:'Liberation Mono','Noto Sans CJK SC',monospace;font-size:8.8px;line-height:10.56px;color:#ccc;letter-spacing:0">Microsoft Windows [<span class="cj">版本</span> 10.0.19045.2728]
(c) Microsoft Corporation<span class="cj">。保留所有权利。</span>

C:\Users\Administrator&gt;python --versio</pre>
<div style="position:absolute;left:257.3px;top:111.9px;width:5.2px;height:2.2px;background:#d0d0d0;"></div>
</div>
<div id="overlays">
<div style="position:absolute;left:1056px;top:530.6px;width:80px;height:5.2px;overflow:hidden"><span style="position:absolute;left:1.0px;top:-0.7px;font-size:7.92px;line-height:12px;color:#fff;white-space:nowrap;text-shadow:0 0 1.5px #000,0.6px 0.8px 1.2px rgba(0,0,0,.95);">最大化窗口</span><span style="position:absolute;left:70.0px;top:-0.7px;font-size:7.92px;line-height:12px;color:#fff;white-space:nowrap;text-shadow:0 0 1.5px #000;">L</span></div>
<svg style="position:absolute;left:1127.0px;top:366.0px;" width="40" height="40" viewBox="0 0 40 40"><defs><linearGradient id="tm" x1="0" y1="0" x2="0" y2="1"><stop offset="0" stop-color="#3788e6"/><stop offset="1" stop-color="#52b4fa"/></linearGradient><radialGradient id="tg"><stop offset=".7" stop-color="#9fd4ff" stop-opacity=".55"/><stop offset="1" stop-color="#9fd4ff" stop-opacity="0"/></radialGradient></defs><circle cx="19.8" cy="20.2" r="19" fill="url(#tg)"/><circle cx="19.8" cy="20.2" r="14.6" fill="url(#tm)" stroke="#a8dcff" stroke-width=".9"/><text x="19.8" y="23.6" font-size="9.3" text-anchor="middle" fill="#e2f1ff" font-family="Liberation Sans,sans-serif">00:28</text></svg>
<svg style="position:absolute;left:845.6px;top:435.0px;" width="10" height="15" viewBox="0 0 10 15"><path d="M1 .8 V11.6 L3.5 9.3 L5.4 13.6 L7 12.9 L5.1 8.7 L8.6 8.5 Z" fill="#fff" stroke="#222" stroke-width=".8" stroke-linejoin="round"/></svg>
</div>
<div id="taskbar">
<div style="position:absolute;left:0.0px;top:686.6px;width:1267.0px;height:26.4px;background:linear-gradient(90deg,#243840 0%,#26383f 55%,#243445 72%,#202c48 86%,#1b2442 100%);"></div>
<svg style="position:absolute;left:10.2px;top:694.2px;" width="11.4" height="11.2" viewBox="0 0 11.4 11.2"><g fill="#fff"><path d="M0 1.6 L4.7.9V5.3H0Z"/><path d="M5.4.8 L11.2 0V5.3H5.4Z"/><path d="M0 5.9H4.7V10.3L0 9.6Z"/><path d="M5.4 5.9H11.2V11.2L5.4 10.4Z"/></g></svg>
<svg style="position:absolute;left:41.6px;top:693.4px;" width="15.4" height="12.4" viewBox="0 0 15.4 12.4"><path d="M.6 1.4h4.6l1 1.2H14.6V11.8H.6Z" fill="#f4c84a"/><path d="M.6 3.8H14.6V11.8H.6Z" fill="#fbe07a"/><path d="M2.6 7.4H12.4V11.8H2.6Z" fill="#4a9be0"/><path d="M4.6 9.2H10.4V11.8H4.6Z" fill="#8fd0a8"/></svg>
<div style="position:absolute;left:36.0px;top:711.7px;width:26.6px;height:1.4px;background:#7fbef0;"></div>
<svg style="position:absolute;left:73.4px;top:691.4px;" width="17.4" height="16.8" viewBox="0 0 17.4 16.8"><defs><linearGradient id="eg" x1="0" y1="0" x2="1" y2="0"><stop offset="0" stop-color="#1c8ad8"/><stop offset=".55" stop-color="#25b8c8"/><stop offset="1" stop-color="#4cdc5a"/></linearGradient></defs><path d="M1.4 8.4 A7.4 7.4 0 0 1 16.2 7.4 C16.4 10.4 13.6 11.2 11.6 10.6 C10.4 10.2 10.2 9 10.8 8 C10 6.4 6.4 6 5.6 9 C5 12 8 14.8 11 15 A7.4 7.4 0 0 1 1.4 8.4Z" fill="url(#eg)"/><path d="M5.6 9 C5 12 8 14.8 11.4 14.9 C13 14.6 14.4 13.6 15 12.4 C11.6 14 8.4 12.6 8.2 9.6 C8.2 8.4 9.4 7.4 10.6 7.6 C9 6 6 6.4 5.6 9Z" fill="#1565b8"/><circle cx="4.6" cy="12.6" r="3.4" fill="#d4d4d4"/><circle cx="4.6" cy="11.8" r="1.1" fill="#777"/><path d="M2.6 14.6a2 1.8 0 0 1 4 0Z" fill="#777"/></svg>
<svg style="position:absolute;left:105.6px;top:691.6px;" width="17" height="17" viewBox="0 0 17 17"><circle cx="8.5" cy="8.5" r="8.2" fill="#e8eeff"/><circle cx="8.5" cy="8.5" r="6.8" fill="#3a5ee0"/><path d="M6.6 7.4a2.2 2.2 0 1 1 2.6 2.8l-1.2 1.4-.6-1.8a2.2 2.2 0 0 1-.8-2.4Z" fill="#f4f8ff"/></svg>
<svg style="position:absolute;left:138.2px;top:691.6px;" width="17" height="17" viewBox="0 0 17 17"><path d="M1.63 4.21 A8.1 8.1 0 0 1 15.65 4.69 L8.50 4.69 A3.81 3.81 0 0 0 5.20 10.40 Z" fill="#e33b2e" stroke="#e33b2e" stroke-width=".3"/><path d="M15.65 4.69 A8.1 8.1 0 0 1 8.22 16.60 L11.80 10.40 A3.81 3.81 0 0 0 8.50 4.69 Z" fill="#fbc116" stroke="#fbc116" stroke-width=".3"/><path d="M8.22 16.60 A8.1 8.1 0 0 1 1.63 4.21 L5.20 10.40 A3.81 3.81 0 0 0 11.80 10.40 Z" fill="#2da94f" stroke="#2da94f" stroke-width=".3"/><circle cx="8.5" cy="8.5" r="3.81" fill="#fff"/><circle cx="8.5" cy="8.5" r="3.00" fill="#2f6fe0"/></svg>
<div style="position:absolute;left:162.8px;top:686.9px;width:32.2px;height:26.4px;background:#56666c;"></div>
<div style="position:absolute;left:162.8px;top:711.7px;width:32.2px;height:1.4px;background:#8ec6ee;"></div>
<svg style="position:absolute;left:171.2px;top:693.4px;" width="14.4" height="11.4" viewBox="0 0 14.4 11.4"><rect width="14.4" height="11.4" fill="#050505"/><rect width="14.4" height="1.6" fill="#9a9a9a"/><path d="M2 4.4a1.2 1.4 0 1 0 0 2.6M4 4.6v.4M4 6.2v.4M5.4 3.8l1.6 3.2M8 7.4h2.6" stroke="#eee" stroke-width=".8" fill="none"/></svg>
<svg style="position:absolute;left:1125.0px;top:696.4px;" width="9.6" height="6.4" viewBox="0 0 9.6 6.4"><path d="M.8 5.4 L4.8 1.4 L8.8 5.4" fill="none" stroke="#fff" stroke-width="1"/></svg>
<svg style="position:absolute;left:1139.6px;top:695.4px;" width="11" height="9.4" viewBox="0 0 11 9.4"><path d="M.6 3.2h2l2.6-2.4v7.6L2.6 6H.6Z" fill="none" stroke="#fff" stroke-width=".8"/><path d="M6.6 3a2.4 2.4 0 0 1 0 3.4M8 1.8a4.2 4.2 0 0 1 0 5.8" fill="none" stroke="#fff" stroke-width=".7"/><path d="M9.4.8a5.8 5.8 0 0 1 0 7.8" fill="none" stroke="#fff" stroke-width=".7" opacity=".45"/></svg>
<svg style="position:absolute;left:1155.6px;top:695.6px;" width="12" height="9" viewBox="0 0 12 9"><rect x="2.6" y=".6" width="8.6" height="5.8" fill="none" stroke="#fff" stroke-width=".9"/><path d="M.4.6h2.4v4.2H.4M5 8.4h4M7 6.4v2" stroke="#fff" stroke-width=".9" fill="none"/></svg>
<span style="position:absolute;left:1170.8px;top:691.1px;font-size:10.6px;line-height:14px;color:#fff;white-space:nowrap;">英</span>
<span style="position:absolute;left:1177.8px;width:60px;text-align:center;top:688.4px;font-size:8.2px;line-height:12px;color:#fff;white-space:nowrap;font-family:'Liberation Sans',sans-serif;letter-spacing:.15px;">14:22</span>
<span style="position:absolute;left:1177.8px;width:60px;text-align:center;top:700.6px;font-size:8.2px;line-height:12px;color:#fff;white-space:nowrap;font-family:'Liberation Sans',sans-serif;letter-spacing:.32px;">2025/12/16</span>
<svg style="position:absolute;left:1239.4px;top:694.0px;" width="17" height="15" viewBox="0 0 17 15"><path d="M.8.6h10.4v7.6H6.2L3.4 10.6V8.2H.8Z" fill="#fff"/><path d="M2.6 2.6h6.8M2.6 4.4h6.8M2.6 6.2h4.6" stroke="#1f2b45" stroke-width=".7"/><circle cx="11.4" cy="10.4" r="4.9" fill="#1e2740" stroke="#8a90a0" stroke-width=".7"/><text x="11.4" y="13.2" font-size="7.8" font-weight="bold" text-anchor="middle" fill="#fff" font-family="Liberation Sans,sans-serif">2</text></svg>
<div style="position:absolute;left:1264.0px;top:686.6px;width:0.7px;height:26.4px;background:#7a8090;"></div>
</div>
</body>
</html>
